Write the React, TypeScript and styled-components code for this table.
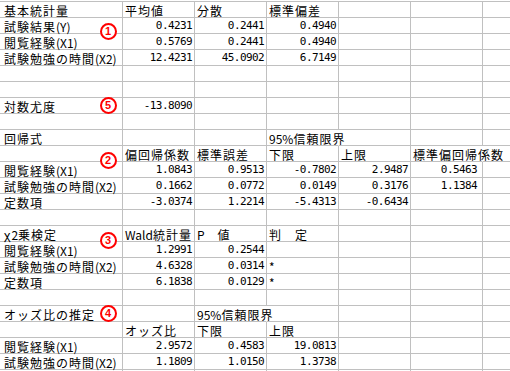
import React from "react";
import styled, { createGlobalStyle } from "styled-components";

const GlobalStyle = createGlobalStyle`
  html, body { margin: 0; padding: 0; background: #ffffff; }
  body { width: 510px; height: 371px; overflow: hidden; }
`;

const LINE = "#c0c0c0";

const Sheet = styled.div`
  position: relative;
  width: 510px;
  height: 371px;
  overflow: hidden;
  padding-top: 1px;
  box-sizing: border-box;
  background: #ffffff;
  color: #000000;
`;

const Grid = styled.div`
  display: grid;
  grid-template-columns: 123px 72px 72px 72px 72px 72px 40px;
  grid-auto-rows: 16px;
  border-top: 1px solid ${LINE};
`;

const Cell = styled.div<{ $num?: boolean; $spill?: boolean; $first?: boolean; $pr?: number }>`
  box-sizing: border-box;
  display: flex;
  align-items: flex-end;
  justify-content: ${(p) => (p.$num ? "flex-end" : "flex-start")};
  border-bottom: 1px solid ${LINE};
  border-right: 1px solid ${(p) => (p.$spill ? "transparent" : LINE)};
  padding: 0 ${(p) => p.$pr ?? 2}px ${(p) => (p.$num ? 2 : 0)}px ${(p) => (p.$first ? 4 : 2)}px;
  white-space: nowrap;
  overflow: visible;
  min-width: 0;
`;

const Label = styled.span`
  font-family: "Noto Sans CJK JP", sans-serif;
  font-size: 12px;
  line-height: 13px;
  white-space: nowrap;
`;

const Run = styled.span<{ $wide: boolean }>`
  letter-spacing: ${(p) => (p.$wide ? "1px" : "0")};
`;

const Num = styled.span`
  font-family: "DejaVu Sans Mono", "Liberation Mono", monospace;
  font-size: 11px;
  letter-spacing: -0.6px;
  line-height: 10px;
  white-space: nowrap;
`;

const Mark = styled.span<{ $x: number; $y: number }>`
  position: absolute;
  left: ${(p) => p.$x - 8.5}px;
  top: ${(p) => p.$y - 8.5}px;
  width: 17px;
  height: 17px;
  box-sizing: border-box;
  border: 2px solid #ff0000;
  border-radius: 50%;
  background: #ffffff;
  color: #ff0000;
  font-family: "Liberation Sans", Arial, sans-serif;
  font-weight: bold;
  font-size: 11px;
  line-height: 13px;
  text-align: center;
`;

type CellSpec = string | { v: string; spill?: boolean; pr?: number };

const rows: CellSpec[][] = [
  ["基本統計量", "平均値", "分散", "標準偏差", "", "", ""],
  ["試験結果(Y)", "0.4231", "0.2441", "0.4940", "", "", ""],
  ["閲覧経験(X1)", "0.5769", "0.2441", "0.4940", "", "", ""],
  ["試験勉強の時間(X2)", "12.4231", "45.0902", "6.7149", "", "", ""],
  ["", "", "", "", "", "", ""],
  ["", "", "", "", "", "", ""],
  ["対数尤度", "-13.8090", "", "", "", "", ""],
  ["", "", "", "", "", "", ""],
  ["回帰式", "", "", { v: "95%信頼限界", spill: true }, "", "", ""],
  ["", "偏回帰係数", "標準誤差", "下限", "上限", { v: "標準偏回帰係数", spill: true }, ""],
  ["閲覧経験(X1)", "1.0843", "0.9513", "-0.7802", "2.9487", { v: "0.5463", pr: 5 }, ""],
  ["試験勉強の時間(X2)", "0.1662", "0.0772", "0.0149", "0.3176", { v: "1.1384", pr: 5 }, ""],
  ["定数項", "-3.0374", "1.2214", "-5.4313", "-0.6434", "", ""],
  ["", "", "", "", "", "", ""],
  ["χ2乗検定", "Wald統計量", "P　値", "判　定", "", "", ""],
  ["閲覧経験(X1)", "1.2991", "0.2544", "", "", "", ""],
  ["試験勉強の時間(X2)", "4.6328", "0.0314", "*", "", "", ""],
  ["定数項", "6.1838", "0.0129", "*", "", "", ""],
  ["", "", "", "", "", "", ""],
  ["オッズ比の推定", "", { v: "95%信頼限界", spill: true }, "", "", "", ""],
  ["", "オッズ比", "下限", "上限", "", "", ""],
  ["閲覧経験(X1)", "2.9572", "0.4583", "19.0813", "", "", ""],
  ["試験勉強の時間(X2)", "1.1809", "1.0150", "1.3738", "", "", ""],
  ["", "", "", "", "", "", ""],
];

const marks = [
  { n: "1", x: 108, y: 31 },
  { n: "5", x: 108, y: 105 },
  { n: "2", x: 108, y: 160 },
  { n: "3", x: 108, y: 240 },
  { n: "4", x: 108, y: 313 },
];

const isNum = (s: string) => /^-?\d+\.\d+$/.test(s);

function LabelText({ text }: { text: string }) {
  const parts = text.match(/[\x20-\x7e]+|[^\x20-\x7e]+/g) ?? [];
  return (
    <Label>
      {parts.map((p, i) => (
        <Run key={i} $wide={!/^[\x20-\x7e]+$/.test(p)}>
          {p}
        </Run>
      ))}
    </Label>
  );
}

export default function App() {
  return (
    <>
      <GlobalStyle />
      <Sheet>
        <Grid>
          {rows.map((row, r) =>
            row.map((c, ci) => {
              const spec = typeof c === "string" ? { v: c } : c;
              const num = isNum(spec.v);
              return (
                <Cell
                  key={`${r}-${ci}`}
                  $num={num}
                  $spill={spec.spill}
                  $first={ci === 0}
                  $pr={spec.pr}
                >
                  {spec.v === "" ? null : num ? <Num>{spec.v}</Num> : <LabelText text={spec.v} />}
                </Cell>
              );
            })
          )}
        </Grid>
        {marks.map((m) => (
          <Mark key={m.n} $x={m.x} $y={m.y}>
            {m.n}
          </Mark>
        ))}
      </Sheet>
    </>
  );
}
